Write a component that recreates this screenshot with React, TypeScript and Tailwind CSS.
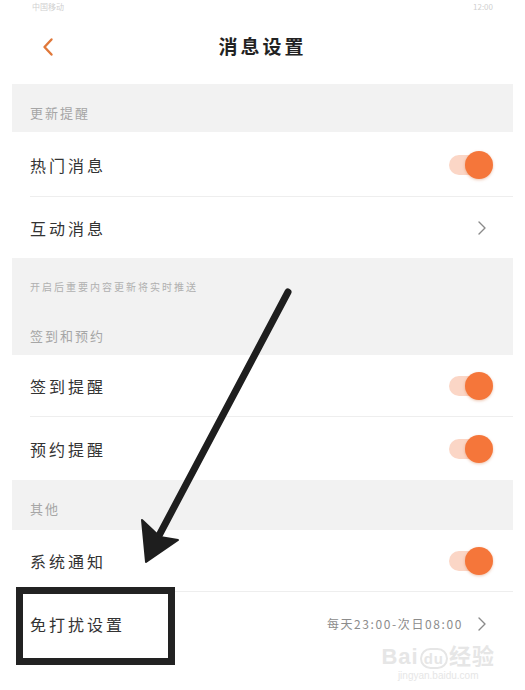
import type { JSX } from "react";

const font = { fontFamily: '"Noto Sans CJK SC", "Noto Sans", sans-serif' };

function Toggle(): JSX.Element {
  return (
    <div className="relative h-[30px] w-[48px]">
      <div className="absolute left-[2px] top-[5px] h-[20px] w-[38px] rounded-full bg-[#fbd6c6]" />
      <div className="absolute right-[2px] top-[1px] h-[28px] w-[28px] rounded-full bg-[#f5763a] shadow-[0_1px_3px_rgba(200,90,30,0.35)]" />
    </div>
  );
}

function Chevron(): JSX.Element {
  return (
    <svg width="10" height="16" viewBox="0 0 10 16" className="mr-[8px] text-[#8a8a8a]">
      <path d="M2 2 L8 8 L2 14" fill="none" stroke="currentColor" strokeWidth="1.4" strokeLinecap="round" strokeLinejoin="round" />
    </svg>
  );
}

function Row({
  label,
  right,
  height,
  divider,
}: {
  label: string;
  right: JSX.Element;
  height: string;
  divider?: boolean;
}): JSX.Element {
  return (
    <div className={`relative flex items-center justify-between bg-white pl-[18px] pr-[18px] ${height}`}>
      <span className="text-[16px] tracking-[3px] text-[#333]">{label}</span>
      {right}
      {divider && <div className="absolute bottom-0 left-[18px] right-0 h-px bg-[#eeeeee]" />}
    </div>
  );
}

export default function App(): JSX.Element {
  return (
    <div className="relative h-[690px] w-[525px] overflow-hidden bg-white" style={font}>
      <div className="mx-[12px] flex flex-col">
        <div className="flex h-[12px] items-center justify-between px-[20px] pt-[1px] text-[8px] leading-[10px] text-[#d0d0d0]">
          <span>中国移动</span>
          <span>12:00</span>
        </div>

        <div className="relative flex h-[72px] items-center justify-center">
          <svg width="12" height="20" viewBox="0 0 12 20" className="absolute left-[30px] top-[25px]">
            <path d="M9.5 2.5 L2.5 10 L9.5 17.5" fill="none" stroke="#e0783a" strokeWidth="2.4" strokeLinecap="round" strokeLinejoin="round" />
          </svg>
          <span className="-mt-[4px] text-[19px] font-bold tracking-[3px] text-[#222]">消息设置</span>
        </div>

        <div className="flex h-[48px] items-end bg-[#f2f2f2] pb-[10px] pl-[18px] text-[13px] tracking-[2px] text-[#a6a6a6]">
          更新提醒
        </div>
        <Row label="热门消息" right={<Toggle />} height="h-[65px]" divider />
        <Row label="互动消息" right={<Chevron />} height="h-[61px]" />

        <div className="flex h-[97px] flex-col bg-[#f2f2f2] pl-[18px]">
          <span className="mt-[21px] text-[10px] tracking-[2px] text-[#b0b0b0]">开启后重要内容更新将实时推送</span>
          <span className="mt-[32px] text-[13px] tracking-[2px] text-[#a6a6a6]">签到和预约</span>
        </div>
        <Row label="签到提醒" right={<Toggle />} height="h-[62px]" divider />
        <Row label="预约提醒" right={<Toggle />} height="h-[63px]" />

        <div className="flex h-[50px] items-end bg-[#f2f2f2] pb-[12px] pl-[18px] text-[13px] tracking-[2px] text-[#a6a6a6]">
          其他
        </div>
        <Row label="系统通知" right={<Toggle />} height="h-[62px]" divider />
        <Row
          label="免打扰设置"
          right={
            <div className="flex items-center gap-[14px]">
              <span className="text-[12px] tracking-[1.6px] text-[#8c8c8c]">每天23:00-次日08:00</span>
              <Chevron />
            </div>
          }
          height="h-[63px]"
        />
      </div>

      <div className="absolute bottom-[8px] right-[30px] flex flex-col items-center text-[#e6e6e6]">
        <span className="text-[22px] font-bold leading-none tracking-[1px]" style={{ fontFamily: '"Liberation Sans", "Noto Sans CJK SC", sans-serif' }}>
          Bai<span className="mx-[1px] rounded-full border-2 border-[#e6e6e6] px-[2px] text-[15px]">du</span>经验
        </span>
        <span className="mt-[2px] text-[10px] leading-tight" style={{ fontFamily: '"Liberation Sans", sans-serif' }}>jingyan.baidu.com</span>
      </div>

      <div className="absolute left-[16px] top-[587px] h-[78px] w-[159px] border-[7px] border-[#222]" />

      <svg width="525" height="690" className="pointer-events-none absolute left-0 top-0">
        <line x1="288" y1="292" x2="154" y2="545" stroke="#1e1e1e" strokeWidth="7" strokeLinecap="round" />
        <path d="M142 520 L146 562 L178 540 L160 537 Z" fill="#1e1e1e" stroke="#1e1e1e" strokeWidth="2" strokeLinejoin="round" />
      </svg>
    </div>
  );
}
